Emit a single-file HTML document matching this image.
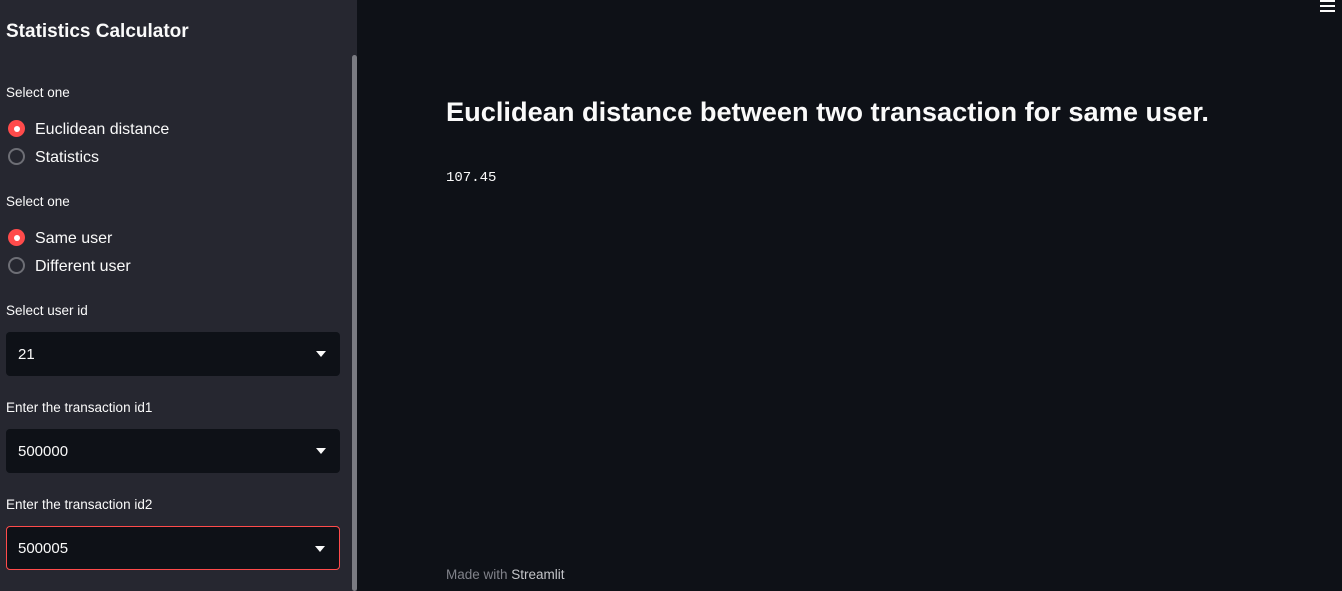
<!DOCTYPE html>
<html><head><style>
*{margin:0;padding:0;box-sizing:border-box}
body{width:1342px;height:591px;overflow:hidden;background:#0e1117;font-family:"Liberation Sans",sans-serif;color:#fafafa;position:relative}
.sb{position:absolute;left:0;top:0;width:357px;height:591px;background:#262730}
.scroll{position:absolute;left:352px;top:55px;width:5px;height:536px;background:#7a7b82;border-radius:3px}
.t{position:absolute;white-space:nowrap}
.h{font-size:19px;font-weight:bold;left:6px;top:21px}
.lab{font-size:13.5px;left:6px}
.opt{font-size:16px;left:35px}
.r{position:absolute;left:8px;width:17px;height:17px;border-radius:50%}
.on{background:#ff4b4b}
.on:after{content:"";position:absolute;left:5.5px;top:5.5px;width:6px;height:6px;border-radius:50%;background:#fff}
.off{border:2px solid #6d6e75}
.sel{position:absolute;left:6px;width:334px;height:44px;background:#0e1117;border-radius:4px;font-size:15px;padding:14px 12px}
.sel:after{content:"";position:absolute;right:14px;top:19px;border-left:5px solid transparent;border-right:5px solid transparent;border-top:6px solid #fafafa}
</style></head><body>
<div class="sb">
<div class="scroll"></div>
<div class="t h">Statistics Calculator</div>
<div class="t lab" style="top:85px">Select one</div>
<div class="r on" style="top:120px"></div><div class="t opt" style="top:121px">Euclidean distance</div>
<div class="r off" style="top:148px"></div><div class="t opt" style="top:149px">Statistics</div>
<div class="t lab" style="top:194px">Select one</div>
<div class="r on" style="top:229px"></div><div class="t opt" style="top:230px">Same user</div>
<div class="r off" style="top:257px"></div><div class="t opt" style="top:258px">Different user</div>
<div class="t lab" style="top:303px">Select user id</div>
<div class="sel" style="top:332px">21</div>
<div class="t lab" style="top:400px">Enter the transaction id1</div>
<div class="sel" style="top:429px">500000</div>
<div class="t lab" style="top:497px">Enter the transaction id2</div>
<div class="sel" style="top:526px;border:1px solid #ff4b4b;padding:13px 11px">500005</div>
</div>
<div class="t" style="left:446px;top:96px;font-size:27.2px;font-weight:bold">Euclidean distance between two transaction for same user.</div>
<div class="t" style="left:446px;top:170px;font-size:14px;font-family:'Liberation Mono',monospace">107.45</div>
<div class="t" style="left:446px;top:567px;font-size:13.5px;color:#80828a">Made with <span style="color:#c4c5c9">Streamlit</span></div>
<div style="position:absolute;left:1320px;top:0;width:15px">
<div style="height:2px;background:#fafafa;margin-top:0"></div>
<div style="height:2px;background:#fafafa;margin-top:3px"></div>
<div style="height:2px;background:#fafafa;margin-top:3px"></div>
</div>
</body></html>
